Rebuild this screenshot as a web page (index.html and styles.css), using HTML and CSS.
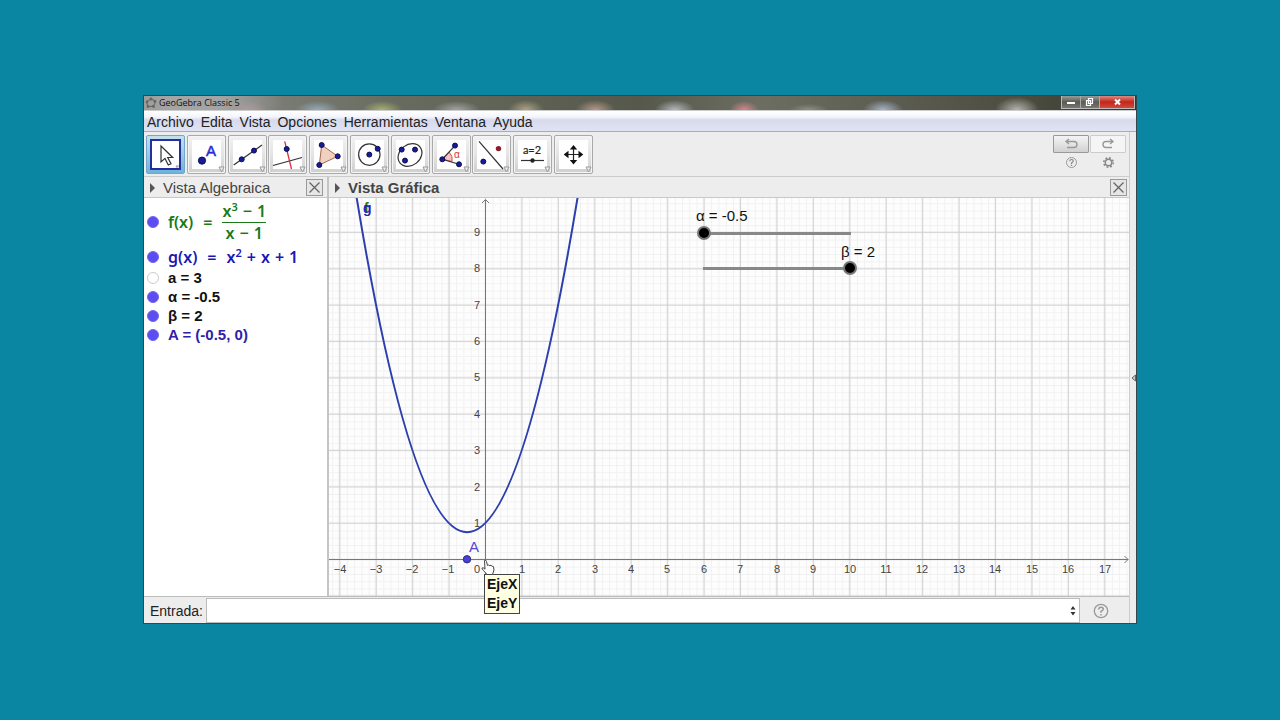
FILE: index.html
```html
<!DOCTYPE html>
<html lang="es">
<head>
<meta charset="utf-8">
<title>GeoGebra Classic 5</title>
<link rel="stylesheet" href="styles.css">
</head>
<body>
<div class="window">
  <header class="titlebar">
    <svg class="logo" width="12" height="12" viewBox="0 0 12 12"><ellipse cx="6" cy="6" rx="4" ry="3.4" transform="rotate(-20 6 6)" fill="none" stroke="#666"/><g fill="#666"><circle cx="6" cy="2" r="1.4"/><circle cx="10" cy="4.5" r="1.4"/><circle cx="8.5" cy="9.5" r="1.4"/><circle cx="3" cy="9.5" r="1.4"/><circle cx="2" cy="5" r="1.4"/></g></svg>
    <span class="title">GeoGebra Classic 5</span>
    <div class="controls">
      <button class="ctl min" aria-label="Minimizar"><svg width="18" height="12"><path d="M5 6h8v2H5z" fill="#fff"/></svg></button>
      <button class="ctl max" aria-label="Restaurar"><svg width="18" height="12"><path d="M7.5 2.5h4v5h-4zM5.500 4.500h4v5h-4z" fill="#777" stroke="#fff" stroke-width="1.200"/></svg></button>
      <button class="ctl close" aria-label="Cerrar"><svg width="34" height="12"><path d="M15 3.500l5 5m0-5l-5 5" stroke="#fff" stroke-width="2"/></svg></button>
    </div>
  </header>
  <nav class="menu">
    <button>Archivo</button><button>Edita</button><button>Vista</button><button>Opciones</button><button>Herramientas</button><button>Ventana</button><button>Ayuda</button>
  </nav>
  <div class="content">
    <main class="main">
      <div class="toolbar">
        <div class="tools">
          <button class="tool selected" aria-label="Elige y mueve"><svg viewBox="0 0 29 29"><path d="M10 6v16l4-3.600 3.300 6.600 2.700-1.300-3.300-6.200h5z" fill="#fff" stroke="#333" stroke-width="1.200"/><path class="more" d="M25 26h5l-2.500 4z"/></svg></button>
          <button class="tool" aria-label="Punto"><svg viewBox="0 0 29 29"><circle class="dot big" cx="10" cy="20.600" r="3.600"/><text class="icon-a" x="14" y="16">A</text><path class="more" d="M27 27h5l-2.500 5z"/></svg></button>
          <button class="tool" aria-label="Recta"><svg viewBox="0 0 29 29"><path class="ln" d="M.7 25L29 5"/><circle class="dot" cx="8.700" cy="19.300" r="2.500"/><circle class="dot" cx="21" cy="10.600" r="2.500"/><path class="more" d="M27 27h5l-2.500 5z"/></svg></button>
          <button class="tool" aria-label="Perpendicular"><svg viewBox="0 0 29 29"><path class="ln" d="M0 25.500L29 17.500"/><path d="M11.700 1.300L18.500 29" stroke="#d62f45" stroke-width="1.300"/><circle class="dot" cx="13.700" cy="9" r="2.500"/><path class="more" d="M27 27h5l-2.500 5z"/></svg></button>
          <button class="tool" aria-label="Polígono"><svg viewBox="0 0 29 29"><path d="M7.700 5L23.700 16.300 5.300 25z" fill="#f0d0c0" stroke="#a5664b"/><circle class="dot" cx="7.700" cy="5" r="2.500"/><circle class="dot" cx="23.700" cy="16.300" r="2.500"/><circle class="dot" cx="5.300" cy="25" r="2.500"/><path class="more" d="M27 27h5l-2.500 5z"/></svg></button>
          <button class="tool" aria-label="Circunferencia"><svg viewBox="0 0 29 29"><circle class="ln" cx="14.300" cy="14.600" r="10.700"/><circle class="dot" cx="14.300" cy="14.600" r="2.500"/><circle class="dot" cx="22.700" cy="8.800" r="2.500"/><path class="more" d="M27 27h5l-2.500 5z"/></svg></button>
          <button class="tool" aria-label="Elipse"><svg viewBox="0 0 29 29"><ellipse class="ln" cx="14" cy="15" rx="12.800" ry="10.300" transform="rotate(-38 14 15)"/><circle class="dot" cx="5.700" cy="9.600" r="2.500"/><circle class="dot" cx="19" cy="9.600" r="2.500"/><circle class="dot" cx="9" cy="20.600" r="2.500"/><path class="more" d="M27 27h5l-2.500 5z"/></svg></button>
          <button class="tool" aria-label="Ángulo"><svg viewBox="0 0 29 29"><path d="M5.300 19.300L12 12a10 10 0 0 1 3 9.500z" fill="#f7c4c4" stroke="#d04a55"/><path class="ln" d="M18 5.600L5.300 19.300 22 24.300"/><circle class="dot" cx="5.300" cy="19.300" r="2.500"/><circle class="dot" cx="18" cy="5.600" r="2.500"/><circle class="dot" cx="22" cy="24.300" r="2.500"/><text class="icon-alpha" x="17" y="18">α</text><path class="more" d="M27 27h5l-2.500 5z"/></svg></button>
          <button class="tool" aria-label="Simetría axial"><svg viewBox="0 0 29 29"><path class="ln" d="M2 1.300L26 29"/><circle cx="21.500" cy="8.600" r="2.700" fill="#8c1c2c"/><circle class="dot" cx="6.300" cy="21.600" r="2.500"/><path class="more" d="M27 27h5l-2.500 5z"/></svg></button>
          <button class="tool" aria-label="Deslizador"><svg viewBox="0 0 29 29"><text class="icon-s" x="14" y="14">a=2</text><path class="ln" d="M3 20.500h23"/><circle cx="14.500" cy="20.500" r="2.200" fill="#222"/><path class="more" d="M27 27h5l-2.500 5z"/></svg></button>
          <button class="tool" aria-label="Desplaza vista gráfica"><svg viewBox="0 0 29 29"><path d="M14.500 7v15M7 14.500h15" stroke="#222" stroke-width="1.200"/><path d="M14.500 5l3.700 4.500h-7.400zM14.500 24.500l3.700-4.500h-7.400zM4.700 14.500l4.800-3.800v7.600zM24.300 14.500l-4.800-3.800v7.600z" fill="#111"/><path class="more" d="M27 27h5l-2.500 5z"/></svg></button>
        </div>
        <div class="actions">
          <button class="act undo" aria-label="Deshace"><svg width="14" height="12"><path d="M5 1L2 3.500 5 6M2 3.500h8a3 3 0 0 1 0 6H3" /></svg></button>
          <button class="act redo" aria-label="Rehace"><svg width="14" height="12"><path d="M9 1l3 2.500L9 6M12 3.500H5a3 3 0 0 0 0 6h6" /></svg></button>
          <button class="plain" aria-label="Ayuda"><svg width="13" height="13"><circle cx="6.500" cy="6.500" r="5" fill="none" stroke="#999"/><path d="M4.800 5.200q0-1.700 1.700-1.700t1.700 1.500q0 1-1.700 2v1M6.500 8.800v1.200" fill="none" stroke="#888" stroke-width="1.200"/></svg></button>
          <button class="plain" aria-label="Preferencias"><svg width="13" height="13"><g fill="none" stroke="#888"><circle cx="6.500" cy="6.500" r="3.200" stroke-width="1.400"/><circle cx="6.500" cy="6.500" r="4.700" stroke-width="1.600" stroke-dasharray="1.850 1.840"/></g></svg></button>
        </div>
      </div>
      <div class="views">
        <section class="algebra">
          <header class="view-head"><i class="arrow"></i><span>Vista Algebraica</span><button class="x" aria-label="Cerrar"><svg width="15" height="15"><path d="M2.500 2.500l10 10m0-10l-10 10"/></svg></button></header>
          <ul class="objects">
            <li class="frow green math"><i class="mark"></i><span>f(x)</span><span class="eq">=</span><span class="frac"><span>x<sup>3</sup><b>−</b>1</span><span>x<b>−</b>1</span></span></li>
            <li class="grow blue math"><i class="mark"></i><span>g(x)</span><span class="eq">=</span><span>x<sup>2</sup><b>+</b>x<b>+</b>1</span></li>
            <li><i class="mark off"></i><span>a = 3</span></li>
            <li><i class="mark"></i><span>α = -0.5</span></li>
            <li><i class="mark"></i><span>β = 2</span></li>
            <li class="point"><i class="mark"></i><span>A = (-0.5, 0)</span></li>
          </ul>
        </section>
        <section class="graphics">
          <header class="view-head strong"><i class="arrow"></i><span>Vista Gráfica</span><button class="x" aria-label="Cerrar"><svg width="15" height="15"><path d="M2.500 2.500l10 10m0-10l-10 10"/></svg></button></header>
          <div class="plot">
            <svg class="canvas" viewBox="329 198 800 398" preserveAspectRatio="xMinYMin slice">
              <defs>
                <pattern id="minor" x="485.300" y="559.500" width="7.286" height="7.270" patternUnits="userSpaceOnUse"><path d="M0 0H8M0 0V8" stroke="#f1f1f1" stroke-width="2" fill="none"/></pattern>
                <pattern id="major" x="467.300" y="541.500" width="36.430" height="36.360" patternUnits="userSpaceOnUse"><path d="M0 18H37M18 0V37" stroke="#cdcdcd" stroke-width="1" fill="none"/></pattern>
              </defs>
              <rect x="329" y="198" width="800" height="398" fill="#fdfdfd"/>
              <rect x="329" y="198" width="800" height="398" fill="url(#minor)"/>
              <rect x="329" y="198" width="800" height="398" fill="url(#major)"/>
              <path class="axis" d="M329 559.500H1128M1124.500 556l3.500 3.500-3.500 3.500M485.500 596V200M482 203l3.500-3.500 3.500 3.500"/>
              <g class="ticks">
                <text x="340" y="573">−4</text><text x="376" y="573">−3</text><text x="412" y="573">−2</text><text x="448" y="573">−1</text><text x="477" y="573">0</text><text x="522" y="573">1</text><text x="558" y="573">2</text><text x="595" y="573">3</text><text x="631" y="573">4</text><text x="667" y="573">5</text><text x="704" y="573">6</text><text x="740" y="573">7</text><text x="777" y="573">8</text><text x="813" y="573">9</text><text x="850" y="573">10</text><text x="886" y="573">11</text><text x="922" y="573">12</text><text x="959" y="573">13</text><text x="995" y="573">14</text><text x="1032" y="573">15</text><text x="1068" y="573">16</text><text x="1105" y="573">17</text>
                <text x="477" y="527">1</text><text x="477" y="491">2</text><text x="477" y="454">3</text><text x="477" y="418">4</text><text x="477" y="381">5</text><text x="477" y="345">6</text><text x="477" y="309">7</text><text x="477" y="272">8</text><text x="477" y="236">9</text>
              </g>
              <path d="M354.200 182.800Q467.100 881.600 580 182.800" fill="none" stroke="#2c3fae" stroke-width="2"/>
              <text class="fn f" x="364" y="213">f</text><text class="fn g" x="363" y="213">g</text>
              <circle cx="467" cy="559.300" r="3.700" fill="#4a3fd8" stroke="#2d2a80"/>
              <text class="pt" x="469" y="552">A</text>
            </svg>
            <label class="slabel alpha" for="alpha">α = -0.5</label>
            <input class="slider s-alpha" id="alpha" type="range" min="-0.5" max="5" step="0.1" value="-0.5">
            <label class="slabel beta" for="beta">β = 2</label>
            <input class="slider s-beta" id="beta" type="range" min="-5" max="2" step="0.1" value="2">
            <svg class="hand" width="14" height="17" viewBox="0 0 14 17"><path d="M3.500 1.500q1.500-1 2 1l1 4 1-.5 1.300.7 1.200-.4 1.200 1 1.200.2.600 3.500-1.500 4.500H6L2.500 11.500q-2-2-1.500-2.500 1-1 3 1.200z" fill="#fff" stroke="#444"/></svg>
            <div class="tip" role="tooltip">EjeX<br>EjeY</div>
          </div>
        </section>
      </div>
      <div class="inputbar">
        <label for="entry">Entrada:</label>
        <div class="entry"><input id="entry" type="text"><svg width="6" height="10"><path d="M3 0l2.500 3.500h-5zM3 9.500L.5 6h5z" fill="#333"/></svg></div>
        <button class="plain" aria-label="Ayuda de entrada"><svg width="16" height="16"><circle cx="8" cy="8" r="6.700" fill="none" stroke="#999" stroke-width="1.300"/><path d="M5.700 6.400q0-2.200 2.300-2.200t2.300 1.900q0 1.200-2.300 2.400v1.200M8 11v1.500" fill="none" stroke="#999" stroke-width="1.500"/></svg></button>
      </div>
    </main>
    <aside class="side"><button aria-label="Mostrar apariencias"><svg width="5" height="8"><path d="M4.500 1v6L1 4z" fill="#ccc" stroke="#666"/></svg></button></aside>
  </div>
</div>
</body>
</html>
```
FILE: styles.css
```css
* { box-sizing: border-box; }
body {
  margin: 0;
  min-height: 100vh;
  padding: 95px 143px 96px;
  display: flex;
  background: #0a86a2;
  font: 14px/18px "Liberation Sans", Arial, sans-serif;
  color: #222;
}
button { font: inherit; color: inherit; padding: 0; border: 0; background: none; }
svg { display: block; }
.window {
  flex: 1;
  min-width: 0;
  display: flex;
  flex-direction: column;
  border: 1px solid #33474d;
  background: #ededed;
}
.titlebar {
  height: 15px;
  display: flex;
  align-items: center;
  gap: 2px;
  border-bottom: 1px solid #ccc;
  background:
    radial-gradient(ellipse 90px 40px at 5% 50%, #a4a4a4 30%, transparent),
    radial-gradient(ellipse 20px 9px at 10.500% 100%, #b5908c, transparent),
    radial-gradient(ellipse 22px 9px at 17.500% 100%, #96aabb, transparent),
    radial-gradient(ellipse 20px 9px at 24% 100%, #a9b070, transparent),
    radial-gradient(ellipse 24px 9px at 31.500% 100%, #a4a4a0, transparent),
    radial-gradient(ellipse 18px 10px at 38.500% 100%, #b0a284, transparent),
    radial-gradient(ellipse 20px 10px at 45.500% 100%, #b8988a, transparent),
    radial-gradient(ellipse 20px 10px at 53.500% 100%, #b4b8be, transparent),
    radial-gradient(ellipse 15px 9px at 60.500% 100%, #d8868c, transparent),
    radial-gradient(ellipse 20px 6px at 67% 100%, #8f9084, transparent),
    radial-gradient(ellipse 20px 10px at 74.500% 100%, #a5b4cc, transparent),
    radial-gradient(ellipse 22px 13px at 88% 100%, #b4b4ae, transparent),
    linear-gradient(90deg, #8f8f8d, #686c60 25%, #55584a 50%, #6d6e62 62%, #4a4b3e 90%, #333);
}
.logo { margin-left: 1px; }
.title { font: 9px/14px "Open Sans", "Noto Sans", sans-serif; color: #111; }
.controls { display: flex; margin-left: auto; align-self: flex-start; border: 1px solid #bbb; border-top: 0; margin-right: 1px; }
.ctl { border-right: 1px solid #aaa; background: linear-gradient(#9b9b98, #5b5b56 50%, #77776f); }
.ctl.close { border-right: 0; background: linear-gradient(#dc8a80, #c0271c 50%, #d5493a); }
.menu {
  display: flex;
  gap: 7px;
  padding: 2px 3px 0;
  border-bottom: 1px solid #a9abb5;
  background: linear-gradient(#fff, #f3f5fb 30%, #d6daec 45%, #dfe3f3);
}
.content { flex: 1; display: flex; }
.main { flex: 1; min-width: 0; display: flex; flex-direction: column; }
.side { width: 7px; display: flex; align-items: center; justify-content: flex-end; border-left: 1px solid #ccc; }
.toolbar { height: 45px; display: flex; align-items: flex-start; justify-content: space-between; border-bottom: 1px solid #ccc; padding: 3px 3px 0 2px; }
.tools { width: 447px; display: flex; justify-content: space-between; }
.tool {
  width: 39px;
  height: 39px;
  padding: 4px;
  border: 1px solid #a9a9a9;
  border-radius: 2px;
  background: linear-gradient(#f2f2f2, #e4e4e4 50%, #cfcfcf);
  box-shadow: inset 0 0 0 1px #f5f5f5;
}
.tool svg { width: 29px; height: 29px; background: #fff; overflow: visible; }
.tool.selected { border-color: #6fa8cc; background: linear-gradient(#c5e0f0, #98cbe8 50%, #6db3dc); box-shadow: none; }
.tool.selected svg { outline: 2px solid #24309a; outline-offset: -1px; }
.dot { fill: #171a9c; stroke: #10104c; }
.ln { fill: none; stroke: #333; stroke-width: 1.2; }
.more { fill: #eee; stroke: #999; stroke-width: 1; }
.icon-a { font: 15px "Liberation Sans", sans-serif; fill: #2a2ad6; stroke: #2a2ad6; stroke-width: 0.5; }
.icon-alpha { font: 10px "Liberation Sans", sans-serif; fill: #d23343; }
.icon-s { font: 11px Lato, sans-serif; fill: #222; stroke: #222; stroke-width: 0.2; text-anchor: middle; }
.actions { display: grid; grid-template-columns: 36px 36px; gap: 3px 1px; justify-items: center; }
.act { width: 36px; height: 18px; display: flex; align-items: center; justify-content: center; border: 1px solid #ccc; border-radius: 1px; background: #f5f5f5; }
.act.undo { border-color: #999; background: linear-gradient(#f3f3f3, #e4e4e4 50%, #d0d0d0); }
.act path { fill: none; stroke: #999; stroke-width: 1.4; }
.views { flex: 1; display: flex; }
.algebra { width: 185px; display: flex; flex-direction: column; border-right: 2px solid #c4c4c4; }
.graphics { flex: 1; min-width: 0; display: flex; flex-direction: column; }
.view-head { height: 21px; display: flex; align-items: center; padding: 1px 4px 0 6px; border-bottom: 1px solid #c8c8c8; color: #444; font-size: 15px; }
.view-head.strong { font-weight: bold; padding: 1px 2px 0 6px; }
.arrow { border: 5px solid transparent; border-left-color: #555; border-right: 0; margin-right: 8px; }
.x { margin-left: auto; border: 1px solid #999; background: #e6e6e6; }
.x path { stroke: #666; stroke-width: 1.3; }
.objects { flex: 1; list-style: none; margin: 0; padding: 0; background: #fff; font-weight: bold; font-size: 15px; color: #111; }
.objects li { height: 19px; display: flex; align-items: center; padding-left: 3px; }
.objects .frow { height: 48px; }
.objects .grow { height: 22px; }
.mark { width: 12px; height: 12px; border-radius: 50%; background: #5b4df0; margin-right: 9px; border: 1px solid #7468ee; flex: none; }
.mark.off { background: #fff; border-color: #ccc; }
.objects .math { font: 600 16px/20px "Noto Sans", sans-serif; }
.math sup { font-size: 11px; line-height: 0; }
.math b { font-weight: 600; margin: 0 5px; }
.eq { margin: 0 10px; }
.objects .green { color: #187a18; }
.objects .blue { color: #1818b8; }
.objects .point { color: #2d22a8; }
.frac { display: flex; flex-direction: column; align-items: center; }
.frac span:first-child { border-bottom: 1px solid #187a18; padding-bottom: 1px; }
.plot { flex: 1; position: relative; }
.canvas { position: absolute; inset: 0; width: 100%; height: 100%; }
.axis { fill: none; stroke: #777; stroke-width: 1; }
.ticks { font: 11px "Liberation Sans", sans-serif; fill: #444; text-anchor: middle; }
.fn { font: bold 14px "Liberation Sans", sans-serif; }
.fn.f { fill: #187a18; }
.fn.g { fill: #2424b8; }
.pt { font: 15px "Liberation Sans", sans-serif; fill: #5546d8; }
.slabel { position: absolute; color: #111; font-size: 15px; }
.slabel.alpha { left: 367px; top: 9px; }
.slabel.beta { left: 512px; top: 45px; }
.slider { position: absolute; left: 368px; width: 160px; height: 14px; margin: 0; appearance: none; background: linear-gradient(#888, #888) center / 148px 3px no-repeat; }
.s-alpha { top: 28px; }
.s-beta { top: 63px; }
.slider::-webkit-slider-thumb { appearance: none; width: 14px; height: 14px; border-radius: 50%; background: #000; border: 2px solid #777; }
.hand { position: absolute; left: 152px; top: 361px; z-index: 2; }
.tip { position: absolute; left: 155px; top: 376px; z-index: 1; padding: 0 2px; border: 1px solid #444; background: #ffffe1; color: #111; font-weight: bold; line-height: 19px; }
.inputbar { height: 27px; display: flex; align-items: stretch; border-top: 1px solid #bbb; padding-top: 1px; }
.inputbar label { padding: 0 3px 0 6px; align-self: center; }
.entry { flex: 1; display: flex; align-items: center; padding-right: 3px; border: 1px solid #bbb; background: #fff; }
.entry input { flex: 1; min-width: 0; border: 0; outline: 0; background: none; font: inherit; }
.inputbar .plain { width: 49px; display: flex; align-items: center; padding-left: 13px; }
```
